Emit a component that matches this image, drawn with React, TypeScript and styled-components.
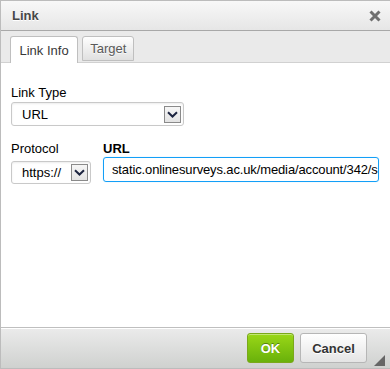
import React from "react";
import styled, { createGlobalStyle } from "styled-components";

const Global = createGlobalStyle`
  html, body { margin: 0; padding: 0; background: #fff; }
  body { font-family: "Liberation Sans", Arial, sans-serif; font-size: 13px; }
  * { box-sizing: border-box; }
`;

const Dialog = styled.div`
  width: 390px;
  height: 369px;
  border: 1px solid #bcbcbc;
  border-right: none;
  display: flex;
  flex-direction: column;
  background: #ebebeb;
  font-family: "Liberation Sans", Arial, sans-serif;
`;

const TitleBar = styled.div`
  height: 30px;
  flex: none;
  display: flex;
  align-items: center;
  justify-content: space-between;
  padding: 0 9px 0 11px;
  background: linear-gradient(#f8f8f8, #e6e6e6);
  border-bottom: 1px solid #a8a8a8;
  color: #474747;
  font-weight: bold;
  font-size: 13px;
  text-shadow: 0 1px 0 #fff;
`;

const CloseIcon = styled.svg`
  width: 12px;
  height: 12px;
  display: block;
`;

const TabsBar = styled.div`
  flex: none;
  display: flex;
  align-items: flex-end;
  gap: 4px;
  height: 31px;
  padding: 5px 0 0 9px;
  background: #eaeaea;
  position: relative;
  z-index: 1;
`;

const Tab = styled.div<{ $active?: boolean }>`
  height: ${(p) => (p.$active ? "27px" : "25px")};
  margin-bottom: ${(p) => (p.$active ? "-1px" : "0")};
  align-self: flex-start;
  padding: 0 ${(p) => (p.$active ? "8.5px" : "7px")};
  display: flex;
  align-items: center;
  border: 1px solid #bfbfbf;
  border-bottom: ${(p) => (p.$active ? "none" : "1px solid #bfbfbf")};
  border-radius: 3px 3px 0 0;
  background: ${(p) => (p.$active ? "#fff" : "linear-gradient(#fefefe, #e0e0e0)")};
  color: ${(p) => (p.$active ? "#383838" : "#595959")};
  font-size: 13px;
  text-shadow: 0 1px 0 rgba(255, 255, 255, 0.75);
`;

const Content = styled.div`
  flex: 1;
  background: #fff;
  border-top: 1px solid #d1d1d1;
  padding: 22px 10px 0 10px;
  display: flex;
  flex-direction: column;
`;

const Field = styled.div`
  display: flex;
  flex-direction: column;
`;

const Label = styled.label<{ $bold?: boolean }>`
  font-size: 13px;
  line-height: 16px;
  color: #000;
  font-weight: ${(p) => (p.$bold ? "bold" : "normal")};
`;

const SelectBox = styled.div<{ $width: number; $height: number; $top: number }>`
  width: ${(p) => p.$width}px;
  height: ${(p) => p.$height}px;
  margin-top: ${(p) => p.$top}px;
  border: 1px solid #c9c9c9;
  border-radius: 3px;
  box-shadow: inset 0 1px 2px rgba(0, 0, 0, 0.08);
  background: #fff;
  display: flex;
  align-items: center;
  justify-content: space-between;
  padding: 0 2px 0 10px;
  color: #000;
  font-size: 13px;
`;

const ArrowBox = styled.div`
  width: 17px;
  height: 17px;
  border: 1px solid #8a8a8a;
  background: linear-gradient(#f6f6f6, #e3e3e3);
  display: flex;
  align-items: center;
  justify-content: center;
`;

const Row = styled.div`
  display: flex;
  align-items: flex-start;
  gap: 12px;
  margin-top: 15px;
`;

const UrlInput = styled.div`
  width: 276px;
  height: 25px;
  margin-top: 0px;
  border: 1px solid #139ff7;
  border-radius: 3px;
  box-shadow: 0 0 1px rgba(19, 159, 247, 0.4);
  display: flex;
  align-items: center;
  padding-left: 8px;
  overflow: hidden;
  white-space: nowrap;
  color: #000;
  font-size: 13px;
  letter-spacing: -0.13px;
`;

const Footer = styled.div`
  height: 41px;
  flex: none;
  position: relative;
  border-top: 1px solid #bfbfbf;
  background: linear-gradient(#ebebeb, #cfd1cf);
  box-shadow: inset 0 1px 0 #fff;
  display: flex;
  justify-content: flex-end;
  align-items: flex-start;
  gap: 6px;
  padding: 5px 23px 0 0;
`;

const Button = styled.div<{ $ok?: boolean }>`
  height: 30px;
  width: ${(p) => (p.$ok ? "47px" : "67px")};
  display: flex;
  align-items: center;
  justify-content: center;
  border-radius: 3px;
  font-weight: bold;
  font-size: 13px;
  border: 1px solid ${(p) => (p.$ok ? "#7aa81a" : "#b6b6b6")};
  background: ${(p) =>
    p.$ok ? "linear-gradient(#9ad717, #69b10b)" : "linear-gradient(#fff, #e4e4e4)"};
  color: ${(p) => (p.$ok ? "#fff" : "#333")};
  text-shadow: ${(p) => (p.$ok ? "0 -1px 0 #55830c" : "0 1px 0 #fff")};
  box-shadow: inset 0 1px 0 rgba(255, 255, 255, 0.4);
`;

const Grip = styled.svg`
  position: absolute;
  right: 5px;
  bottom: 2px;
  width: 11px;
  height: 11px;
  display: block;
`;

const Chevron = () => (
  <svg width="11" height="7" viewBox="0 0 11 7">
    <path d="M1 1.2 L5.5 5.5 L10 1.2" fill="none" stroke="#1c2440" strokeWidth="2" />
  </svg>
);

export default function App() {
  return (
    <>
      <Global />
      <Dialog>
        <TitleBar>
          <span>Link</span>
          <CloseIcon viewBox="0 0 12 12">
            <path d="M1.5 1.5 L10.5 10.5 M10.5 1.5 L1.5 10.5" stroke="#6f6f6f" strokeWidth="3" />
          </CloseIcon>
        </TitleBar>
        <TabsBar>
          <Tab $active>Link Info</Tab>
          <Tab>Target</Tab>
        </TabsBar>
        <Content>
          <Field>
            <Label>Link Type</Label>
            <SelectBox $width={173} $height={24} $top={1}>
              <span>URL</span>
              <ArrowBox>
                <Chevron />
              </ArrowBox>
            </SelectBox>
          </Field>
          <Row>
            <Field>
              <Label>Protocol</Label>
              <SelectBox $width={80} $height={23} $top={4}>
                <span>https://</span>
                <ArrowBox>
                  <Chevron />
                </ArrowBox>
              </SelectBox>
            </Field>
            <Field>
              <Label $bold>URL</Label>
              <UrlInput>static.onlinesurveys.ac.uk/media/account/342/s</UrlInput>
            </Field>
          </Row>
        </Content>
        <Footer>
          <Button $ok>OK</Button>
          <Button>Cancel</Button>
          <Grip viewBox="0 0 11 11">
            <path d="M11 0 L11 11 L0 11 Z" fill="#666" />
          </Grip>
        </Footer>
      </Dialog>
    </>
  );
}
